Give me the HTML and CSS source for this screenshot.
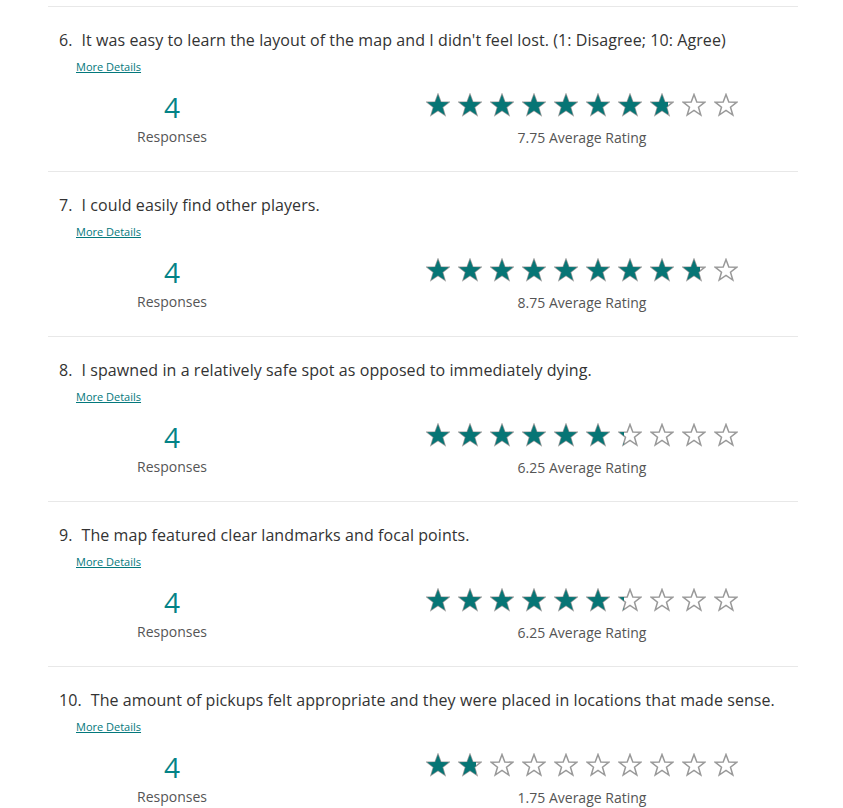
FILE: index.html
```html
<!DOCTYPE html>
<html>
<head>
<meta charset="utf-8">
<link rel="stylesheet" href="styles.css">
</head>
<body>
<svg width="0" height="0" class="defs">
  <defs>
    <polygon id="star" points="12,1.5 14.8,9 22.8,9.2 16.5,14.2 18.8,22 12,17.4 5.2,22 7.5,14.2 1.2,9.2 9.2,9"/>
  </defs>
</svg>
<div class="page">
  <section class="q">
    <h3 class="q-title"><span class="q-num">6.</span>It was easy to learn the layout of the map and I didn't feel lost. (1: Disagree; 10: Agree)</h3>
    <a class="more" href="#">More Details</a>
    <div class="q-body">
      <div class="count"><div class="count-num">4</div><div class="count-label">Responses</div></div>
      <div class="rating">
        <div class="stars" data-value="7.75"></div>
        <div class="rating-label">7.75 Average Rating</div>
      </div>
    </div>
  </section>
  <section class="q">
    <h3 class="q-title"><span class="q-num">7.</span>I could easily find other players.</h3>
    <a class="more" href="#">More Details</a>
    <div class="q-body">
      <div class="count"><div class="count-num">4</div><div class="count-label">Responses</div></div>
      <div class="rating">
        <div class="stars" data-value="8.75"></div>
        <div class="rating-label">8.75 Average Rating</div>
      </div>
    </div>
  </section>
  <section class="q">
    <h3 class="q-title"><span class="q-num">8.</span>I spawned in a relatively safe spot as opposed to immediately dying.</h3>
    <a class="more" href="#">More Details</a>
    <div class="q-body">
      <div class="count"><div class="count-num">4</div><div class="count-label">Responses</div></div>
      <div class="rating">
        <div class="stars" data-value="6.25"></div>
        <div class="rating-label">6.25 Average Rating</div>
      </div>
    </div>
  </section>
  <section class="q">
    <h3 class="q-title"><span class="q-num">9.</span>The map featured clear landmarks and focal points.</h3>
    <a class="more" href="#">More Details</a>
    <div class="q-body">
      <div class="count"><div class="count-num">4</div><div class="count-label">Responses</div></div>
      <div class="rating">
        <div class="stars" data-value="6.25"></div>
        <div class="rating-label">6.25 Average Rating</div>
      </div>
    </div>
  </section>
  <section class="q">
    <h3 class="q-title"><span class="q-num">10.</span>The amount of pickups felt appropriate and they were placed in locations that made sense.</h3>
    <a class="more" href="#">More Details</a>
    <div class="q-body">
      <div class="count"><div class="count-num">4</div><div class="count-label">Responses</div></div>
      <div class="rating">
        <div class="stars" data-value="1.75"></div>
        <div class="rating-label">1.75 Average Rating</div>
      </div>
    </div>
  </section>
</div>
<script src="script.js"></script>
</body>
</html>
```
FILE: styles.css
```css
html, body {
  margin: 0;
  padding: 0;
  background: #ffffff;
}
body {
  font-family: "Open Sans", "Noto Sans", sans-serif;
  color: #333333;
}
.defs {
  position: absolute;
  width: 0;
  height: 0;
}
.page {
  margin-left: 48px;
  width: 750px;
  padding-top: 6px;
}
.q {
  border-top: 1px solid #e8e8e8;
  height: 164px;
  overflow: hidden;
}
.q-title {
  margin: 0;
  padding: 21px 0 0 11px;
  font-size: 16px;
  font-weight: 400;
  line-height: 24px;
  letter-spacing: 0.08px;
  color: #333333;
}
.q-num {
  margin-right: 9px;
}
.more {
  display: inline-block;
  margin: 7px 0 0 28px;
  font-size: 11px;
  line-height: 16px;
  color: #03787c;
  text-decoration: underline;
}
.q-body {
  display: flex;
  align-items: flex-start;
  margin-top: 11px;
}
.count {
  width: 248px;
  display: flex;
  flex-direction: column;
  align-items: center;
}
.count-num {
  font-size: 28px;
  line-height: 40px;
  color: #038387;
}
.count-label {
  font-size: 14px;
  line-height: 20px;
  color: #555555;
}
.rating {
  margin-left: 130px;
  width: 312px;
  display: flex;
  flex-direction: column;
  align-items: center;
  padding-top: 6px;
}
.stars {
  display: flex;
  gap: 8px;
}
.star {
  position: relative;
  width: 24px;
  height: 24px;
}
.star svg {
  display: block;
  width: 24px;
  height: 24px;
}
.star-empty use {
  fill: #ffffff;
  stroke: #999999;
  stroke-width: 1.5;
}
.star-fill {
  position: absolute;
  left: 0;
  top: 0;
  height: 24px;
  overflow: hidden;
}
.star-fill use {
  fill: #077575;
}
.rating-label {
  margin-top: 11px;
  font-size: 14px;
  line-height: 20px;
  color: #555555;
}
```
FILE: script.js
```js
document.querySelectorAll('.stars').forEach(function (el) {
  var v = parseFloat(el.getAttribute('data-value'));
  var html = '';
  for (var i = 0; i < 10; i++) {
    var f = Math.max(0, Math.min(1, v - i));
    html += '<span class="star">' +
      '<svg class="star-empty" viewBox="0 0 24 24"><use href="#star"/></svg>' +
      (f > 0 ? '<span class="star-fill" style="width:' + (f * 24) + 'px"><svg viewBox="0 0 24 24"><use href="#star"/></svg></span>' : '') +
      '</span>';
  }
  el.innerHTML = html;
});
```
